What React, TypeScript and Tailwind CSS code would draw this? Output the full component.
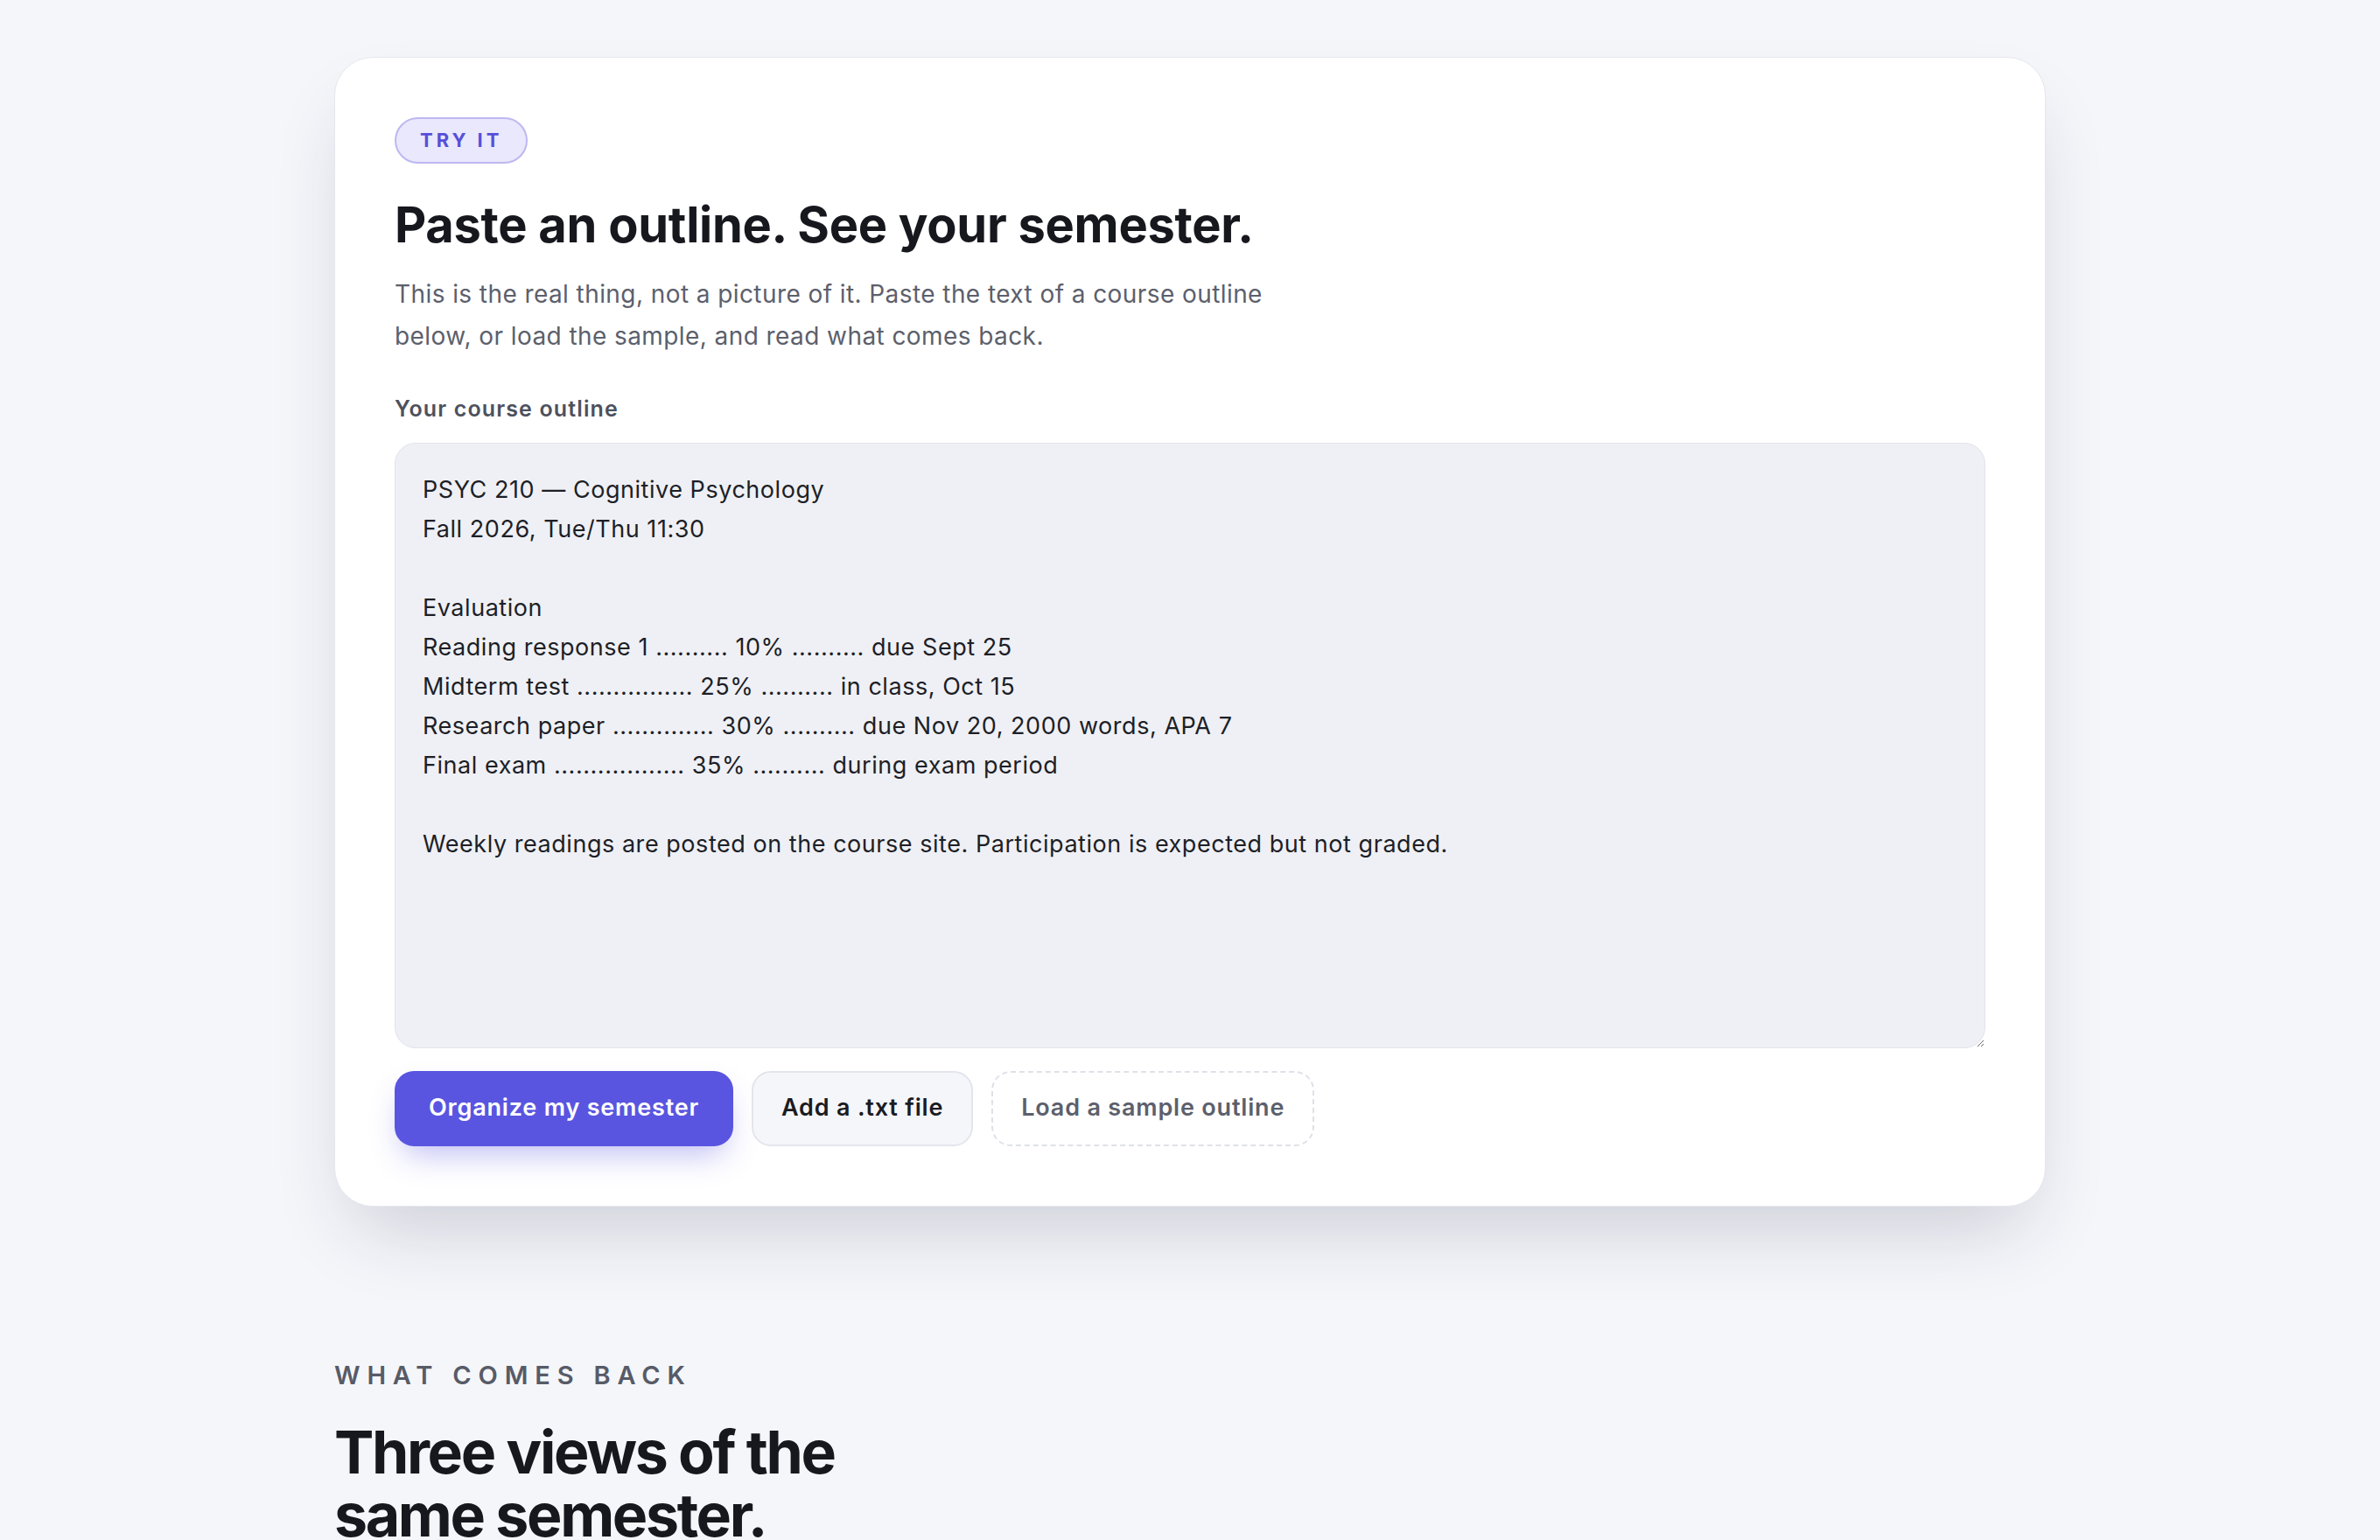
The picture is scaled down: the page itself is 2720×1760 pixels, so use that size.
import React from 'react';

const SAMPLE = `PSYC 210 — Cognitive Psychology
Fall 2026, Tue/Thu 11:30

Evaluation
Reading response 1 .......... 10% .......... due Sept 25
Midterm test ................ 25% .......... in class, Oct 15
Research paper .............. 30% .......... due Nov 20, 2000 words, APA 7
Final exam .................. 35% .......... during exam period

Weekly readings are posted on the course site. Participation is expected but not graded.`;

export default function App() {
  return (
    <div className="min-h-screen bg-[#f5f6fa] font-['Inter',sans-serif] text-[#1b1c22]">
      <div className="mx-auto w-[1956px] pt-[65px]">
        {/* Try it card */}
        <section className="rounded-[44px] border border-[#e6e7ee] bg-white p-[68px] shadow-[0_44px_90px_-24px_rgba(30,34,64,0.2)]">
          <span className="inline-flex h-[53px] items-center rounded-full border-2 border-[#bcb8f1] bg-[#e9e8fc] px-[27px] text-[22px] font-bold tracking-[0.18em] text-[#5650d8]">
            TRY IT
          </span>

          <h2 className="mt-[40px] text-[56px] font-bold leading-[1.1] tracking-[-0.005em] text-[#17181e]">
            Paste an outline. See your semester.
          </h2>
          <p className="mt-[23px] max-w-[1010px] text-[28px] leading-[48.5px] tracking-[0.015em] text-[#5c606c]">
            This is the real thing, not a picture of it. Paste the text of a course outline below, or load the sample, and read what comes back.
          </p>

          <label className="mt-[42px] block text-[25px] font-semibold leading-[32px] tracking-[0.045em] text-[#4d515d]">
            Your course outline
          </label>
          <textarea
            defaultValue={SAMPLE}
            spellCheck={false}
            className="mt-[23px] block h-[692px] w-full rounded-[24px] border border-[#e2e4eb] bg-[#eff0f5] px-[31px] pt-[30px] pb-[31px] font-['Inter',sans-serif] text-[27px] leading-[45px] tracking-[0.02em] text-[#1d1f27] outline-none"
          />

          <div className="mt-[26px] flex items-center gap-[21px]">
            <button className="h-[86px] rounded-[22px] bg-[#5a55e0] px-[39px] text-[27px] font-semibold tracking-[0.03em] text-white shadow-[0_18px_36px_-10px_rgba(90,85,224,0.4)]">
              Organize my semester
            </button>
            <button className="h-[86px] rounded-[22px] border-2 border-[#e3e5ec] bg-[#f5f6fa] px-[32px] text-[27px] font-semibold tracking-[0.03em] text-[#1b1c22]">
              Add a .txt file
            </button>
            <button className="h-[86px] rounded-[22px] border-2 border-dashed border-[#dfe1e8] bg-transparent px-[32px] text-[27px] font-semibold tracking-[0.03em] text-[#5c606c]">
              Load a sample outline
            </button>
          </div>
        </section>

        {/* What comes back */}
        <section className="pt-[176px]">
          <p className="text-[29px] font-semibold leading-[1.2] tracking-[0.27em] text-[#575b67]">
            WHAT COMES BACK
          </p>
          <h2 className="mt-[35px] max-w-[660px] text-[68px] font-bold leading-[1.05] tracking-[-0.035em] text-[#17181e]">
            Three views of the same semester.
          </h2>
        </section>
      </div>
    </div>
  );
}
